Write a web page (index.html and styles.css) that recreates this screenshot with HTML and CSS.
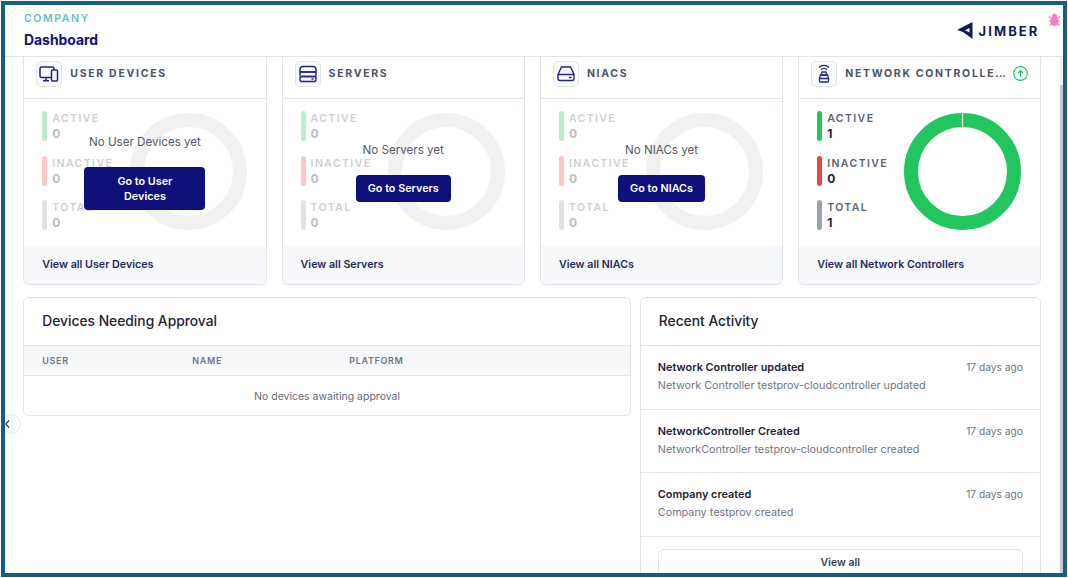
FILE: index.html
```html
<!DOCTYPE html>
<html lang="en">
<head>
    <meta charset="UTF-8">
    <meta name="viewport" content="width=device-width, initial-scale=1.0">
    <title>Dashboard</title>
    <link rel="stylesheet" href="styles.css">
</head>
<body>
    <div class="frame">
        <header class="topbar">
            <div>
                <div class="company">COMPANY</div>
                <h1 class="page-title">Dashboard</h1>
            </div>
            <div class="brand">
                <svg width="16" height="17" viewBox="0 0 16 17"><path d="M15.5 0 L0 8 L6 10 L15.5 17 Z M12.5 6 L8 8.300 L12.500 10.600 Z" fill="#0f1a5c" fill-rule="evenodd"/></svg>
                <span>JIMBER</span>
            </div>
            <svg class="bug" width="11" height="13" viewBox="0 0 11 13" fill="#f47fc4" stroke="#f47fc4"><ellipse cx="5.5" cy="8" rx="3.6" ry="4.5"/><circle cx="5.5" cy="3" r="2"/><path d="M0 3.5l2.5 2M11 3.5l-2.5 2M0 8h2M11 8H9M.5 12.5l2-2M10.5 12.5l-2-2" stroke-width="1.2"/></svg>
        </header>

        <div class="main-row">
            <main class="content">
                <section class="stat-grid">
                    <article class="stat-card is-empty">
                        <div class="stat-head">
                            <span class="icon-box">
                                <svg width="20" height="20" viewBox="0 0 20 20" fill="none" stroke="#23238f" stroke-width="1.5"><rect x="1" y="3" width="14" height="10.5" rx="1.5"/><path d="M7 13.500v3M4 16.800h6"/><rect x="12.5" y="6" width="6" height="11" rx="1" fill="#f9fafc"/></svg>
                            </span>
                            <h2>USER DEVICES</h2>
                        </div>
                        <div class="stat-body">
                            <ul class="legend">
                                <li class="active"><b>ACTIVE</b><i>0</i></li>
                                <li class="inactive"><b>INACTIVE</b><i>0</i></li>
                                <li class="total"><b>TOTAL</b><i>0</i></li>
                            </ul>
                            <div class="donut"></div>
                            <div class="empty-note">
                                <p>No User Devices yet</p>
                                <a class="go-btn narrow">Go to User Devices</a>
                            </div>
                        </div>
                        <a class="stat-foot">View all User Devices</a>
                    </article>

                    <article class="stat-card is-empty">
                        <div class="stat-head">
                            <span class="icon-box">
                                <svg width="20" height="20" viewBox="0 0 20 20" fill="none" stroke="#23238f" stroke-width="1.4"><path d="M5 2.500h10q3 0 3 3v2.500H2V5.500q0-3 3-3z"/><rect x="2" y="8" width="16" height="4.5" rx="1"/><rect x="2" y="12.5" width="16" height="5" rx="2"/><path d="M13.500 15h2"/></svg>
                            </span>
                            <h2>SERVERS</h2>
                        </div>
                        <div class="stat-body">
                            <ul class="legend">
                                <li class="active"><b>ACTIVE</b><i>0</i></li>
                                <li class="inactive"><b>INACTIVE</b><i>0</i></li>
                                <li class="total"><b>TOTAL</b><i>0</i></li>
                            </ul>
                            <div class="donut"></div>
                            <div class="empty-note">
                                <p>No Servers yet</p>
                                <a class="go-btn">Go to Servers</a>
                            </div>
                        </div>
                        <a class="stat-foot">View all Servers</a>
                    </article>

                    <article class="stat-card is-empty">
                        <div class="stat-head">
                            <span class="icon-box">
                                <svg width="20" height="20" viewBox="0 0 20 20" fill="none" stroke="#23238f" stroke-width="1.4"><path d="M5.500 3h9l3.500 7.500v4a2 2 0 0 1-2 2H4a2 2 0 0 1-2-2v-4z"/><path d="M2 10.500h16M13 13.500h2.500"/></svg>
                            </span>
                            <h2>NIACS</h2>
                        </div>
                        <div class="stat-body">
                            <ul class="legend">
                                <li class="active"><b>ACTIVE</b><i>0</i></li>
                                <li class="inactive"><b>INACTIVE</b><i>0</i></li>
                                <li class="total"><b>TOTAL</b><i>0</i></li>
                            </ul>
                            <div class="donut"></div>
                            <div class="empty-note">
                                <p>No NIACs yet</p>
                                <a class="go-btn">Go to NIACs</a>
                            </div>
                        </div>
                        <a class="stat-foot">View all NIACs</a>
                    </article>

                    <article class="stat-card">
                        <div class="stat-head">
                            <span class="icon-box">
                                <svg width="20" height="20" viewBox="0 0 20 20" fill="none" stroke="#23238f" stroke-width="1.3"><path d="M5 3.500a7 7 0 0 1 10 0M7 5.800a4 4 0 0 1 6 0"/><path d="M8 8h4l1 3H7z"/><path d="M6.500 11h7l1 3v3a1 1 0 0 1-1 1h-7a1 1 0 0 1-1-1v-3zM5.500 14.500h9"/></svg>
                            </span>
                            <h2>NETWORK CONTROLLE…</h2>
                            <svg class="up-arrow" width="15" height="15" viewBox="0 0 15 15" fill="none" stroke="#22c55e" stroke-width="1.2"><circle cx="7.5" cy="7.5" r="6.8"/><path d="M7.500 11V4.500M5 7l2.500-2.500L10 7"/></svg>
                        </div>
                        <div class="stat-body">
                            <ul class="legend">
                                <li class="active"><b>ACTIVE</b><i>1</i></li>
                                <li class="inactive"><b>INACTIVE</b><i>0</i></li>
                                <li class="total"><b>TOTAL</b><i>1</i></li>
                            </ul>
                            <div class="donut full"></div>
                        </div>
                        <a class="stat-foot">View all Network Controllers</a>
                    </article>
                </section>

                <section class="lower">
                    <article class="panel approvals">
                        <h3 class="panel-title">Devices Needing Approval</h3>
                        <div class="table-head">
                            <span>USER</span>
                            <span>NAME</span>
                            <span>PLATFORM</span>
                        </div>
                        <p class="table-empty">No devices awaiting approval</p>
                    </article>

                    <article class="panel activity">
                        <h3 class="panel-title">Recent Activity</h3>
                        <div class="activity-row">
                            <div class="activity-top"><strong>Network Controller updated</strong><time>17 days ago</time></div>
                            <p>Network Controller testprov-cloudcontroller updated</p>
                        </div>
                        <div class="activity-row">
                            <div class="activity-top"><strong>NetworkController Created</strong><time>17 days ago</time></div>
                            <p>NetworkController testprov-cloudcontroller created</p>
                        </div>
                        <div class="activity-row">
                            <div class="activity-top"><strong>Company created</strong><time>17 days ago</time></div>
                            <p>Company testprov created</p>
                        </div>
                        <div class="activity-foot"><a class="view-all">View all</a></div>
                    </article>
                </section>

                <span class="collapse-btn">
                    <svg width="5" height="8" viewBox="0 0 5 8" fill="none" stroke="#333" stroke-width="1.2"><path d="M4 .5 .8 4 4 7.500"/></svg>
                </span>
            </main>
            <div class="scrollbar"><div class="scroll-thumb"></div></div>
        </div>
    </div>
</body>
</html>
```

FILE: styles.css
```css
* {
    box-sizing: border-box;
}

html, body {
    height: 100%;
}

body {
    margin: 0;
    padding: 1px;
    background: #fff;
    color: #1f2333;
    font-family: Inter, "Noto Sans", sans-serif;
    overflow: hidden;
}

.frame {
    height: 100%;
    border: 4px solid #156082;
    display: flex;
    flex-direction: column;
    overflow: hidden;
    background: #fff;
}

.topbar {
    flex: none;
    height: 52px;
    padding: 7px 23.5px 0 19px;
    display: flex;
    justify-content: space-between;
    align-items: flex-start;
    border-bottom: 1px solid #e1e4ec;
    position: relative;
}

.company {
    font-size: 10.5px;
    font-weight: 600;
    letter-spacing: 1.6px;
    line-height: 14px;
    color: #5cc4c8;
}

.page-title {
    margin: 6px 0 0;
    font-size: 13.9px;
    line-height: 17px;
    font-weight: 700;
    color: #12127a;
}

.brand {
    display: flex;
    align-items: center;
    gap: 6px;
    margin-top: 10px;
    font-size: 13px;
    font-weight: 700;
    letter-spacing: 2.1px;
    color: #0f1a5c;
}

.bug {
    position: absolute;
    right: 3px;
    top: 8px;
}

.main-row {
    flex: 1;
    min-height: 0;
    display: flex;
}

.content {
    flex: 1;
    min-width: 0;
    padding-left: 18.3px;
    position: relative;
    overflow: hidden;
}

.scrollbar {
    flex: none;
    width: 3px;
    padding-top: 28px;
    background: #f3f3f3;
}

.scroll-thumb {
    height: 100%;
    background: #c8c8c8;
}

.stat-grid {
    display: grid;
    grid-template-columns: repeat(4, 243.3px);
    gap: 15px;
}

.stat-card {
    height: 228px;
    display: flex;
    flex-direction: column;
    border: 1px solid #e1e4ec;
    border-top: 0;
    border-radius: 0 0 6px 6px;
    overflow: hidden;
}

.stat-head {
    flex: none;
    height: 42px;
    padding: 0 12px 8px;
    display: flex;
    align-items: center;
    gap: 8px;
    border-bottom: 1px solid #e1e4ec;
}

.stat-head h2 {
    flex: 1;
    min-width: 0;
    margin: 0;
    font-size: 10.5px;
    font-weight: 700;
    letter-spacing: 1.7px;
    color: #4b5366;
    white-space: nowrap;
}

.icon-box {
    flex: none;
    width: 26px;
    height: 26px;
    border: 1px solid #e1e4ec;
    border-radius: 5px;
    display: flex;
    align-items: center;
    justify-content: center;
    background: #f9fafc;
}

.up-arrow {
    flex: none;
}

.stat-body {
    flex: 1;
    position: relative;
    padding: 12px 0 0 18px;
}

.legend {
    list-style: none;
    margin: 0;
    padding: 0;
}

.legend li {
    height: 30px;
    margin-bottom: 14.5px;
    padding-left: 10px;
    position: relative;
}

.legend li::before {
    content: "";
    position: absolute;
    left: 0;
    top: 0;
    width: 5px;
    height: 30px;
    border-radius: 3px;
    background: #22c55e;
}

.legend .inactive::before {
    background: #ef4444;
}

.legend .total::before {
    background: #9ca3af;
}

.legend b, .legend i {
    display: block;
    font-style: normal;
}

.legend b {
    font-size: 10.5px;
    line-height: 15px;
    font-weight: 600;
    letter-spacing: 1.4px;
    color: #5b6272;
}

.legend i {
    font-size: 12px;
    line-height: 16px;
    font-weight: 700;
    color: #1f2333;
}

.donut {
    position: absolute;
    top: 14px;
    right: 19px;
    width: 117px;
    height: 117px;
    border-radius: 50%;
    border: 14px solid #f1f1f1;
}

.donut.full {
    border-color: #22c55e;
}

.donut.full::after {
    content: "";
    position: absolute;
    left: 44px;
    top: -14px;
    width: 1px;
    height: 14px;
    background: #fff;
}

.is-empty .legend {
    opacity: 0.3;
}

.empty-note {
    position: absolute;
    inset: 0 0 16px 0;
    display: flex;
    flex-direction: column;
    align-items: center;
    justify-content: center;
    padding-top: 15px;
}

.empty-note p {
    margin: 0 0 17px;
    font-size: 11.6px;
    line-height: 16px;
    color: #555b69;
}

.go-btn {
    padding: 6px 12px;
    border-radius: 4px;
    background: #10107a;
    color: #fff;
    font-size: 10.8px;
    line-height: 15px;
    font-weight: 600;
    text-align: center;
}

.go-btn.narrow {
    width: 121px;
    padding: 7px 20px 6px;
}

.stat-foot {
    flex: none;
    height: 38px;
    padding: 0 18px 2px;
    display: flex;
    align-items: center;
    background: #f7f8fa;
    font-size: 10.7px;
    font-weight: 600;
    color: #1e2a5e;
}

.lower {
    margin-top: 12px;
    display: flex;
    align-items: flex-start;
    gap: 9px;
}

.panel {
    border: 1px solid #e1e4ec;
    border-radius: 6px;
    overflow: hidden;
}

.approvals {
    width: 607.5px;
}

.activity {
    width: 401px;
}

.panel-title {
    margin: 0;
    height: 48px;
    padding: 0 18px 2px;
    display: flex;
    align-items: center;
    font-size: 13.8px;
    font-weight: 500;
    color: #1f2333;
    border-bottom: 1px solid #e1e4ec;
}

.table-head {
    height: 30px;
    padding-left: 18px;
    display: grid;
    grid-template-columns: 150px 157px 1fr;
    align-items: center;
    background: #f7f8fa;
    border-bottom: 1px solid #e1e4ec;
    font-size: 9px;
    font-weight: 600;
    letter-spacing: 0.65px;
    color: #6f7583;
}

.table-empty {
    margin: 0;
    height: 39px;
    padding-top: 1px;
    line-height: 39px;
    text-align: center;
    font-size: 10.5px;
    color: #666c79;
}

.activity-row {
    height: 63.5px;
    padding: 13px 17px 0;
    border-bottom: 1px solid #e6e8ee;
}

.activity-top {
    display: flex;
    justify-content: space-between;
    align-items: center;
    line-height: 16px;
}

.activity-top strong {
    font-size: 10.9px;
    font-weight: 600;
    color: #1f2333;
}

.activity-top time {
    font-size: 10.2px;
    color: #70757f;
}

.activity-row p {
    margin: 3px 0 0;
    font-size: 10.8px;
    line-height: 16px;
    color: #70757f;
}

.activity-foot {
    padding: 12px 17px;
}

.view-all {
    display: block;
    height: 34px;
    line-height: 26px;
    text-align: center;
    border: 1px solid #e1e4ec;
    border-radius: 6px;
    font-size: 10.5px;
    font-weight: 600;
    color: #3b4150;
}

/* sits half under the frame edge */
.collapse-btn {
    position: absolute;
    left: -4px;
    top: 357px;
    width: 20px;
    height: 20px;
    border: 1px solid #e1e4ec;
    border-radius: 50%;
    background: #fff;
    display: flex;
    align-items: center;
    padding-left: 3px;
}
```
